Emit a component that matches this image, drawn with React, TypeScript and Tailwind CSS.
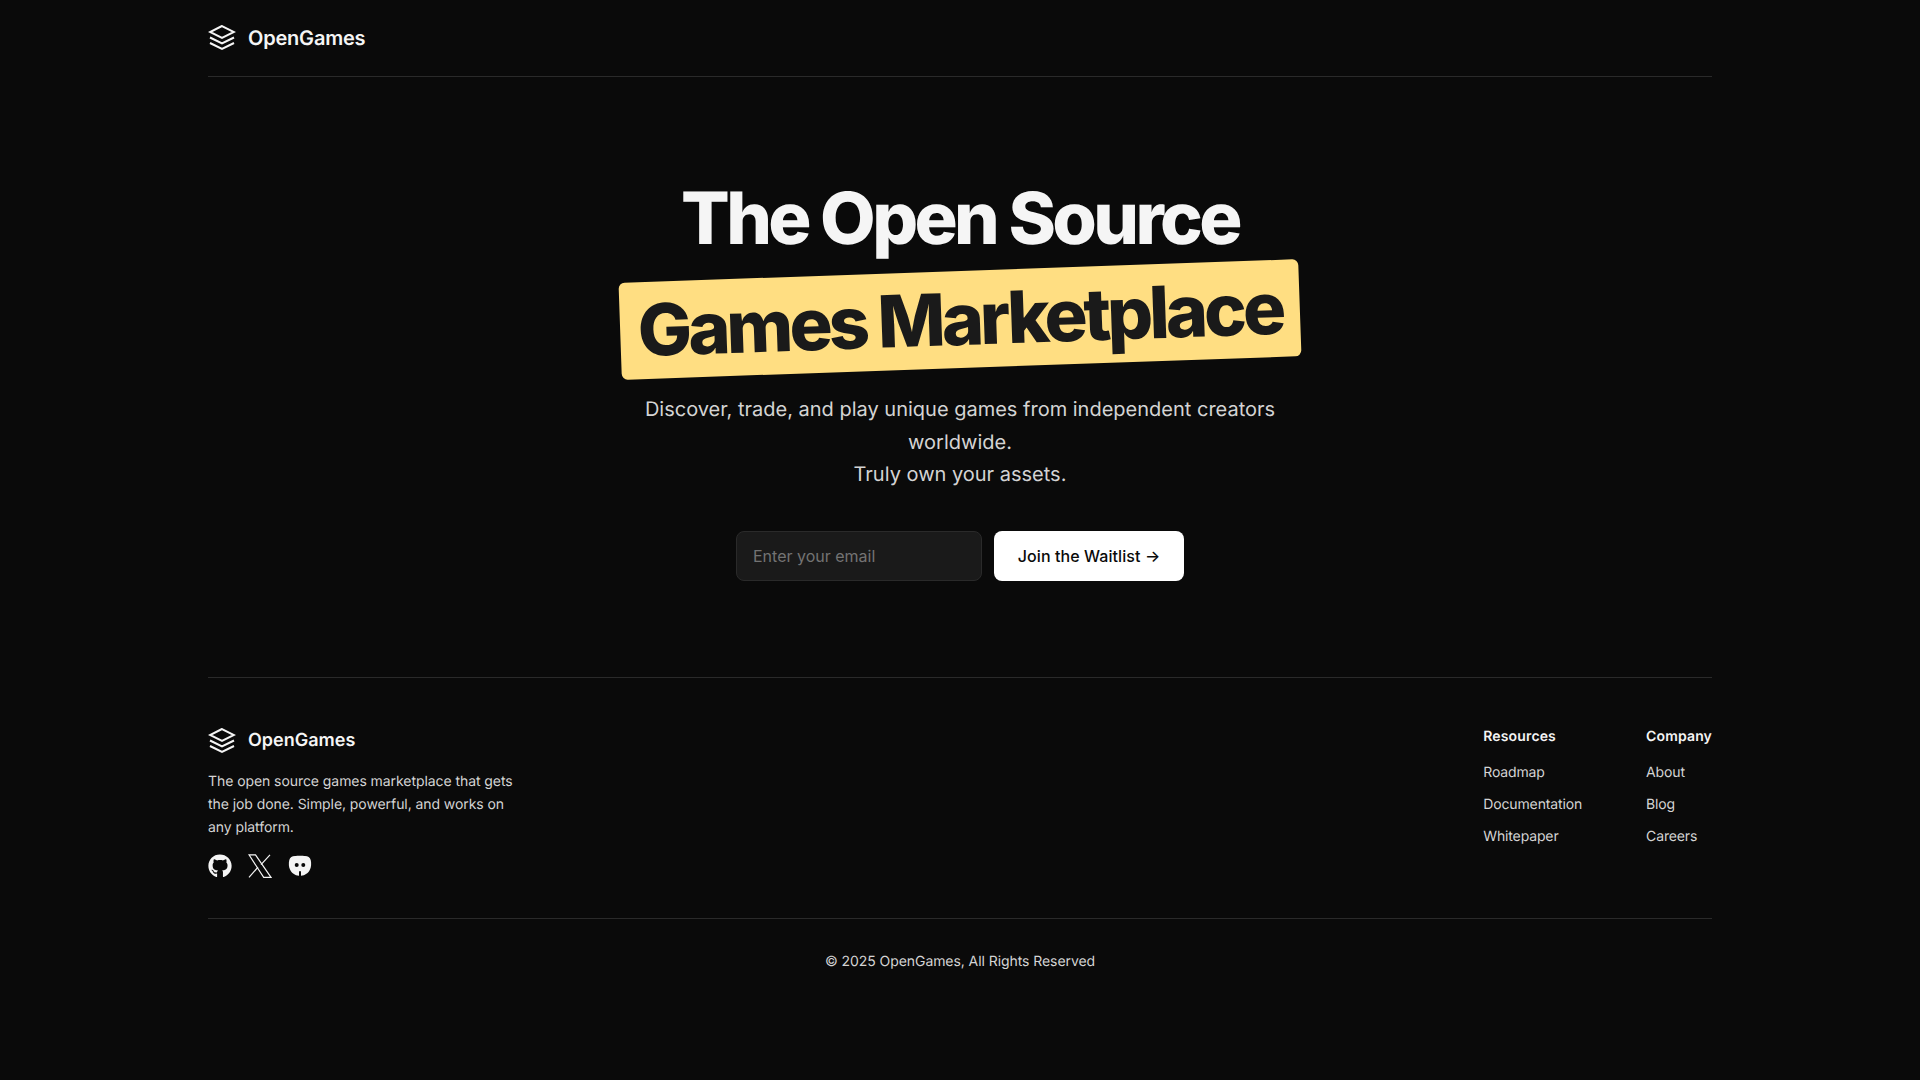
import { FaGithub } from "react-icons/fa";

function Logo({ className }: { className: string }) {
  return (
    <div className="flex items-center gap-3">
      <svg width="28" height="28" viewBox="0 0 28 28" fill="none" stroke="#f5f5f5" strokeWidth="2">
        <path d="M14 2L2 8l12 6l12-6z" />
        <path d="M2 13.500l12 6l12-6" />
        <path d="M2 19l12 6l12-6" />
      </svg>
      <span className={className}>OpenGames</span>
    </div>
  );
}

function XIcon() {
  return (
    <svg width="24" height="24" viewBox="0 0 24 24" fill="none" stroke="#f5f5f5" strokeWidth="1.2">
      <path d="M1 .8h6.500L23 23.400h-7.300z" />
      <path d="M22 .8l-9 9.800M10 13.200L1 23.400" />
    </svg>
  );
}

function DiscordIcon() {
  return (
    <svg width="24" height="24" viewBox="0 0 24 24" fill="#f5f5f5">
      <path
        fillRule="evenodd"
        d="M7 2C9 1.700 15 1.700 17 2C20 2.300 22 3 22.700 6C23.500 9.500 23.200 13 22 15.500C20.500 19 17 21.500 13 21.700L13 17.500Q12 16.500 11 17.500L11 21.700C7 21.500 3.500 19 2 15.500C.8 13 .5 9.500 1.300 6C2 3 4 2.300 7 2ZM8.700 9a2 2 0 1 0 0 4a2 2 0 0 0 0-4ZM15.300 9a2 2 0 1 0 0 4a2 2 0 0 0 0-4Z"
      />
    </svg>
  );
}

const resources = ["Roadmap", "Documentation", "Whitepaper"];
const company = ["About", "Blog", "Careers"];

function LinkColumn({ title, links }: { title: string; links: string[] }) {
  return (
    <div className="pt-px">
      <h3 className="text-sm font-semibold leading-5 tracking-[0.01em] text-[#f5f5f5]">{title}</h3>
      <ul className="mt-4 flex flex-col gap-3">
        {links.map((link) => (
          <li key={link} className="text-sm leading-5 tracking-[-0.01em] text-[#d4d4d4]">
            {link}
          </li>
        ))}
      </ul>
    </div>
  );
}

export default function App() {
  return (
    <div className="min-h-screen bg-[#0a0a0a] font-['Inter',sans-serif] [text-rendering:geometricPrecision]">
      <div className="mx-auto w-[1504px]">
        <header className="flex h-[77px] items-center border-b border-[#2a2a2a]">
          <Logo className="text-xl font-semibold tracking-[-0.01em] text-[#f5f5f5]" />
        </header>

        <main className="flex h-[601px] flex-col items-center border-b border-[#2a2a2a] pt-[106px]">
          <h1 className="text-center text-[72px] font-extrabold leading-[72px] tracking-[-0.05em] text-[#f5f5f5]">
            The Open Source
          </h1>
          <div className="mt-[16px] flex h-[97px] w-[680px] -rotate-2 items-center justify-center rounded-md bg-[#ffde82]">
            <span className="text-[72px] font-extrabold leading-[72px] tracking-[-3.95px] text-[#1a1a1a]">
              Games Marketplace
            </span>
          </div>
          <p className="mt-[25px] w-[672px] text-center text-xl leading-[32.5px] text-[#d4d4d4]">
            Discover, trade, and play unique games from independent creators worldwide.
            <br />
            Truly own your assets.
          </p>
          <form className="mt-[40px] flex gap-3">
            <input
              placeholder="Enter your email"
              className="h-[50px] w-[246px] rounded-lg border border-[#2a2a2a] bg-[#1a1a1a] px-4 text-base text-[#f5f5f5] placeholder:text-[#737373]"
            />
            <button type="button" className="h-[50px] w-[190px] rounded-lg bg-white text-base font-medium tracking-[0.005em] text-[#0a0a0a]">
              Join the Waitlist →
            </button>
          </form>
        </main>

        <footer>
          <div className="flex h-[241px] justify-between border-b border-[#2a2a2a] pt-[48px]">
            <div className="w-[320px]">
              <Logo className="pt-px text-lg font-semibold text-[#f5f5f5]" />
              <p className="mt-[16px] text-sm leading-[22.75px] tracking-[-0.005em] text-[#d4d4d4]">
                The open source games marketplace that gets the job done. Simple, powerful, and works on any platform.
              </p>
              <div className="mt-[15px] flex items-center gap-4">
                <FaGithub size={24} color="#f5f5f5" />
                <XIcon />
                <DiscordIcon />
              </div>
            </div>
            <div className="flex gap-16">
              <LinkColumn title="Resources" links={resources} />
              <LinkColumn title="Company" links={company} />
            </div>
          </div>
          <p className="pt-[33px] pb-[89px] text-center text-sm leading-5 tracking-[-0.005em] text-[#d4d4d4]">
            © 2025 OpenGames, All Rights Reserved
          </p>
        </footer>
      </div>
    </div>
  );
}
